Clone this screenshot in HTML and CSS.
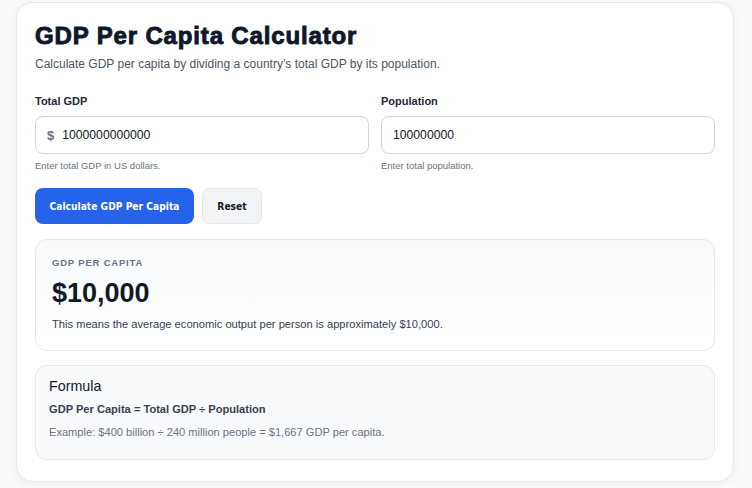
FILE: index.html
```html
<!DOCTYPE html>
<html lang="en">
<head>
<meta charset="utf-8">
<title>GDP Per Capita Calculator</title>
<link rel="stylesheet" href="styles.css">
</head>
<body>
<main class="card">
  <h1 class="title">GDP Per Capita Calculator</h1>
  <p class="subtitle">Calculate GDP per capita by dividing a country’s total GDP by its population.</p>

  <div class="fields">
    <div class="field">
      <label class="label">Total GDP</label>
      <div class="input">
        <span class="prefix">$</span>
        <span class="value">1000000000000</span>
      </div>
      <p class="hint">Enter total GDP in US dollars.</p>
    </div>
    <div class="field">
      <label class="label">Population</label>
      <div class="input">
        <span class="value">100000000</span>
      </div>
      <p class="hint">Enter total population.</p>
    </div>
  </div>

  <div class="actions">
    <button class="btn btn-primary">Calculate GDP Per Capita</button>
    <button class="btn btn-secondary">Reset</button>
  </div>

  <section class="result">
    <div class="result-label">GDP PER CAPITA</div>
    <div class="result-value">$10,000</div>
    <p class="result-note">This means the average economic output per person is approximately $10,000.</p>
  </section>

  <section class="formula">
    <h2 class="formula-title">Formula</h2>
    <p class="formula-eq">GDP Per Capita = Total GDP ÷ Population</p>
    <p class="formula-ex">Example: $400 billion ÷ 240 million people = $1,667 GDP per capita.</p>
  </section>
</main>
</body>
</html>
```

FILE: styles.css
```css
* { box-sizing: border-box; }
html, body { margin: 0; background: #fafafa; }
body {
  padding: 2px 18px 6px 16px;
  font-family: "Liberation Sans", Arial, sans-serif;
  color: #111827;
}
.card {
  background: #fff;
  border: 1px solid #e5e7eb;
  border-radius: 16px;
  box-shadow: 0 2px 8px rgba(0,0,0,0.05);
  padding: 18px 18px 21px 18px;
}
.title {
  margin: 0;
  font-size: 24px;
  line-height: 29px;
  font-weight: 900;
  color: #0f172a;
  letter-spacing: 0.85px;
  -webkit-text-stroke: 0.9px #0f172a;
}
.subtitle {
  margin: 6px 0 0;
  font-size: 12px;
  line-height: 16px;
  color: #4b5563;
}
.fields {
  display: grid;
  grid-template-columns: 1fr 1fr;
  gap: 12px;
  margin-top: 22px;
}
.field { display: flex; flex-direction: column; }
.label {
  font-size: 11px;
  font-weight: 700;
  color: #1f2937;
  line-height: 14px;
}
.input {
  margin-top: 8px;
  height: 38px;
  border: 1px solid #d1d5db;
  border-radius: 8px;
  display: flex;
  align-items: center;
  padding: 0 11px;
  gap: 8px;
  font-size: 12.2px;
  color: #111827;
}
.prefix { color: #6b7280; font-weight: 700; font-size: 13px; }
.hint {
  margin: 6px 0 0;
  font-size: 9.5px;
  line-height: 12px;
  color: #6b7280;
}
.actions {
  display: flex;
  gap: 8px;
  margin-top: 16px;
}
.btn {
  height: 36px;
  border-radius: 8px;
  font-family: "DejaVu Sans Condensed", "DejaVu Sans", sans-serif;
  font-weight: 700;
  font-size: 10.2px;
  padding: 0;
  white-space: nowrap;
  cursor: pointer;
}
.btn-primary {
  background: #2563eb;
  color: #fff;
  border: 0;
  width: 159px;
}
.btn-secondary {
  background: #f3f4f6;
  color: #111827;
  border: 1px solid #e5e7eb;
  width: 60px;
}
.result {
  margin-top: 15px;
  border: 1px solid #e5e7eb;
  border-radius: 12px;
  background: linear-gradient(#f8fafc, #ffffff);
  padding: 17px 16px 19px;
}
.result-label {
  font-size: 9.5px;
  font-weight: 700;
  letter-spacing: 0.8px;
  color: #6b7280;
  line-height: 12px;
}
.result-value {
  margin-top: 8px;
  font-size: 27px;
  font-weight: 700;
  color: #111827;
  line-height: 32px;
}
.result-note {
  margin: 8px 0 0;
  font-size: 11.15px;
  line-height: 14px;
  color: #374151;
}
.formula {
  margin-top: 14px;
  border: 1px solid #e5e7eb;
  border-radius: 12px;
  background: #f8fafc;
  padding: 11px 13px 20px;
}
.formula-title {
  margin: 0;
  font-size: 14.3px;
  font-weight: 400;
  line-height: 18px;
  color: #111827;
}
.formula-eq {
  margin: 7px 0 0;
  font-size: 11.1px;
  font-weight: 700;
  color: #374151;
  line-height: 14px;
}
.formula-ex {
  margin: 9px 0 0;
  font-size: 11.1px;
  color: #6b7280;
  line-height: 14px;
}
```
